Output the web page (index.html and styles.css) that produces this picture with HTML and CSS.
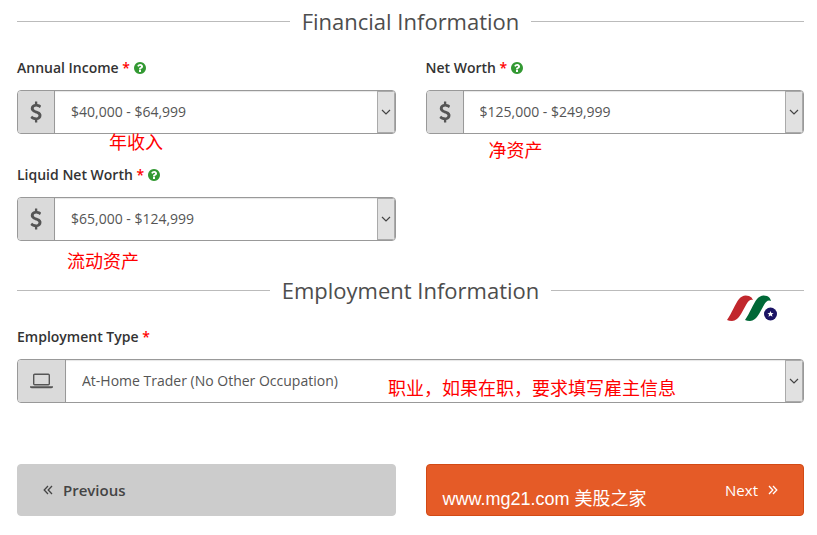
FILE: index.html
```html
<!DOCTYPE html>
<html lang="en">
<head>
    <meta charset="UTF-8">
    <meta name="viewport" content="width=device-width, initial-scale=1.0">
    <title>Financial Information</title>
    <link rel="stylesheet" href="styles.css">
</head>
<body>

    <!-- Shared icons -->
    <svg class="sprite" aria-hidden="true">
        <symbol id="icon-dollar" viewBox="0 0 1024 1792">
            <path d="M978 1185q0 153-99.5 263.5t-258.500 136.500v175q0 14-9 23t-23 9h-135q-13 0-22.500-9.500t-9.500-22.500v-175q-66-9-127.500-31t-101.500-44.500-74-48-46.500-37.500-17.500-18q-17-21-2-41l103-135q7-10 23-12 15-2 24 9l2 2q113 99 243 125 37 8 74 8 81 0 142.500-43t61.500-122q0-28-15-53t-33.500-42-58.500-37.500-66-32-80-32.500q-39-16-61.500-25t-61.500-26.500-62.500-31-56.500-35.500-53.500-42.500-43.500-49-35.500-58-21-66.500-8.500-78q0-138 98-242t255-134v-180q0-13 9.500-22.500t22.500-9.500h135q14 0 23 9t9 23v176q57 6 110.500 23t87 33.500 63.500 37.500 39 29 15 14q17 18 5 38l-81 146q-8 15-23 16-14 3-27-7-3-3-14.500-12t-39-26.500-58.500-32-74.500-26-85.500-11.500q-95 0-155 43t-60 111q0 26 8.500 48t29.500 41.500 39.500 33 56 31 60.500 27 70 27.500q53 20 81 31.500t76 35 75.500 42.500 62 50 53 63.500 31.500 76.500 13 94z"/>
        </symbol>
        <symbol id="icon-help" viewBox="128 128 1536 1536">
            <path d="M1024 1376v-192q0-14-9-23t-23-9h-192q-14 0-23 9t-9 23v192q0 14 9 23t23 9h192q14 0 23-9t9-23zm256-672q0-88-55.500-163t-138.500-116-170-41q-243 0-371 213-15 24 8 42l132 100q7 6 19 6 16 0 25-12 53-68 86-92 34-24 86-24 48 0 85.500 26t37.500 59q0 38-20 61t-68 45q-63 28-115.500 86.500t-52.500 125.500v36q0 14 9 23t23 9h192q14 0 23-9t9-23q0-19 21.500-49.500t54.500-49.500q32-18 49-28.500t46-35 44.500-48 28-60.500 12.500-81zm384 192q0 209-103 385.500t-279.500 279.500-385.500 103-385.500-103-279.500-279.500-103-385.500 103-385.500 279.500-279.500 385.500-103 385.500 103 279.500 279.500 103 385.500z"/>
        </symbol>
        <symbol id="icon-laptop" viewBox="0 0 23 16">
            <rect x="3.700" y="1.200" width="15.600" height="10.600" rx="1" fill="none" stroke="currentColor" stroke-width="1.400"/>
            <path d="M0 13.300h23v.6q0 1.400-2 1.400h-19q-2 0-2-1.400z"/>
        </symbol>
        <symbol id="icon-chevron" viewBox="0 0 10 6">
            <path d="M1 1l4 4 4-4" fill="none" stroke="currentColor" stroke-width="1.200"/>
        </symbol>
        <symbol id="icon-double" viewBox="0 0 10 10">
            <path d="M5 1L1.200 5L5 9M9 1L5.200 5L9 9" fill="none" stroke="currentColor" stroke-width="1.300"/>
        </symbol>
    </svg>

    <form class="form">
        <h2 class="section-title">Financial Information</h2>

        <div class="row">
            <div class="field">
                <div class="field-label">
                    <label for="annual-income">Annual Income <span class="required">*</span></label>
                    <svg class="help"><use href="#icon-help"/></svg>
                </div>
                <div class="input-group">
                    <span class="addon"><svg class="dollar"><use href="#icon-dollar"/></svg></span>
                    <select id="annual-income">
                        <option>$40,000 - $64,999</option>
                    </select>
                    <span class="arrow"><svg><use href="#icon-chevron"/></svg></span>
                </div>
                <span class="note note-income" lang="zh-CN">年收入</span>
            </div>

            <div class="field">
                <div class="field-label">
                    <label for="net-worth">Net Worth <span class="required">*</span></label>
                    <svg class="help"><use href="#icon-help"/></svg>
                </div>
                <div class="input-group">
                    <span class="addon"><svg class="dollar"><use href="#icon-dollar"/></svg></span>
                    <select id="net-worth">
                        <option>$125,000 - $249,999</option>
                    </select>
                    <span class="arrow"><svg><use href="#icon-chevron"/></svg></span>
                </div>
                <span class="note note-worth" lang="zh-CN">净资产</span>
            </div>

            <div class="field">
                <div class="field-label">
                    <label for="liquid-net-worth">Liquid Net Worth <span class="required">*</span></label>
                    <svg class="help"><use href="#icon-help"/></svg>
                </div>
                <div class="input-group">
                    <span class="addon"><svg class="dollar"><use href="#icon-dollar"/></svg></span>
                    <select id="liquid-net-worth">
                        <option>$65,000 - $124,999</option>
                    </select>
                    <span class="arrow"><svg><use href="#icon-chevron"/></svg></span>
                </div>
                <span class="note note-liquid" lang="zh-CN">流动资产</span>
            </div>
        </div>

        <h2 class="section-title">Employment Information</h2>

        <div class="field">
            <svg class="logo" viewBox="0 0 50 26">
                <path d="M0 25C5 18 8 9 12 4Q16-1 22 1Q25 2 26 5Q22 4 19 10L14 19Q10 26 5 26Q2 26 0 25z" fill="#c1272d"/>
                <path d="M18 25C23 18 26 9 30 4Q34-1 40 1Q43 2 44 6Q40 4 37 10L32 19Q28 26 23 26Q20 26 18 25z" fill="#006837"/>
                <circle cx="43.500" cy="19" r="6.500" fill="#1b1464"/>
                <path d="M43.500 16l.9 2 2.200.2-1.700 1.400.6 2.200-2-1.200-2 1.200.6-2.200-1.700-1.400 2.200-.2z" fill="#fff"/>
            </svg>
            <div class="field-label">
                <label for="employment-type">Employment Type <span class="required">*</span></label>
            </div>
            <div class="input-group">
                <span class="addon"><svg class="laptop"><use href="#icon-laptop"/></svg></span>
                <select id="employment-type">
                    <option>At-Home Trader (No Other Occupation)</option>
                </select>
                <span class="arrow"><svg><use href="#icon-chevron"/></svg></span>
            </div>
            <span class="note note-job" lang="zh-CN">职业，如果在职，要求填写雇主信息</span>
        </div>

        <div class="row actions">
            <button type="button" class="btn btn-previous">
                <svg class="angles"><use href="#icon-double"/></svg>
                Previous
            </button>
            <div class="next-wrap">
                <button type="button" class="btn btn-next">
                    Next
                    <svg class="angles angles-right"><use href="#icon-double"/></svg>
                </button>
                <span class="note note-site" lang="zh-CN">www.mg21.com 美股之家</span>
            </div>
        </div>
    </form>

</body>
</html>
```

FILE: styles.css
```css
* {
    box-sizing: border-box;
}

body {
    margin: 0;
    background-color: #fff;
    font-family: 'Open Sans', sans-serif;
    font-size: 14px;
    line-height: 20px;
    color: #333;
}

svg {
    display: block;
    fill: currentColor;
}

.sprite {
    position: absolute;
    width: 0;
    height: 0;
}

.form {
    padding: 6px 13px 16px 17px;
}

.section-title {
    display: flex;
    align-items: center;
    gap: 12px;
    margin: 0 0 22px;
    font-size: 22px;
    font-weight: 400;
    line-height: 30px;
    color: #4d4d4d;
}

.section-title::before,
.section-title::after {
    content: "";
    flex: 1;
    height: 1px;
    background-color: #bbb;
}

.row {
    display: grid;
    grid-template-columns: 1fr 1fr;
    column-gap: 30px;
    row-gap: 31px;
}

.row + .section-title {
    margin-top: 34px;
}

.field {
    position: relative;
}

.field-label {
    display: flex;
    align-items: center;
    gap: 4px;
    margin-bottom: 12px;
    font-weight: 600;
}

.required {
    color: #f00;
}

.help {
    width: 12px;
    height: 12px;
    color: #339933;
}

.input-group {
    position: relative;
    display: flex;
    height: 44px;
    border: 1px solid #999;
    border-radius: 4px;
    overflow: hidden;
}

.addon {
    display: flex;
    align-items: center;
    padding: 0 12px;
    background-color: #dadada;
    border-right: 1px solid #999;
    color: #555;
}

.dollar {
    width: 12px;
    height: 22px;
}

.laptop {
    width: 23px;
    height: 16px;
}

.input-group select {
    flex: 1;
    min-width: 0;
    padding: 0 32px 0 16px;
    border: 0;
    background-color: #fff;
    box-shadow: inset 0 1px 1px rgba(0, 0, 0, 0.1);
    appearance: none;
    font: inherit;
    color: #555;
}

.arrow {
    position: absolute;
    top: 0;
    right: 0;
    bottom: 0;
    display: flex;
    align-items: center;
    justify-content: center;
    width: 18px;
    border: 1px solid #aaa;
    background-color: #e1e1e1;
    color: #444;
    pointer-events: none;
}

.arrow svg {
    width: 10px;
    height: 6px;
}

/* Notes lie over the form */
.note {
    position: absolute;
    font-family: 'Liberation Sans', 'Noto Sans CJK SC', sans-serif;
    font-size: 18px;
    line-height: 24px;
    white-space: nowrap;
    color: #f00;
    pointer-events: none;
}

.note-income {
    top: 73px;
    left: 92px;
}

.note-worth {
    top: 81px;
    left: 63px;
}

.note-liquid {
    top: 85px;
    left: 50px;
}

.note-job {
    top: 50px;
    left: 371px;
}

.note-site {
    top: 23px;
    left: 17px;
    color: #fff;
}

.logo {
    position: absolute;
    top: -32px;
    right: 27px;
    width: 50px;
    height: 26px;
}

.actions {
    margin-top: 61px;
}

.next-wrap {
    position: relative;
}

.btn {
    display: flex;
    align-items: center;
    gap: 10px;
    width: 100%;
    height: 52px;
    padding: 0 25px;
    border: 1px solid #ccc;
    border-radius: 4px;
    font: inherit;
    font-size: 15px;
    cursor: pointer;
}

.btn-previous {
    background-color: #ccc;
    font-weight: 600;
    color: #444;
}

.btn-next {
    justify-content: flex-end;
    border-color: #d24a15;
    background-color: #e55b27;
    color: #fff;
}

.angles {
    width: 10px;
    height: 10px;
}

.angles-right {
    transform: rotate(180deg);
}
```
